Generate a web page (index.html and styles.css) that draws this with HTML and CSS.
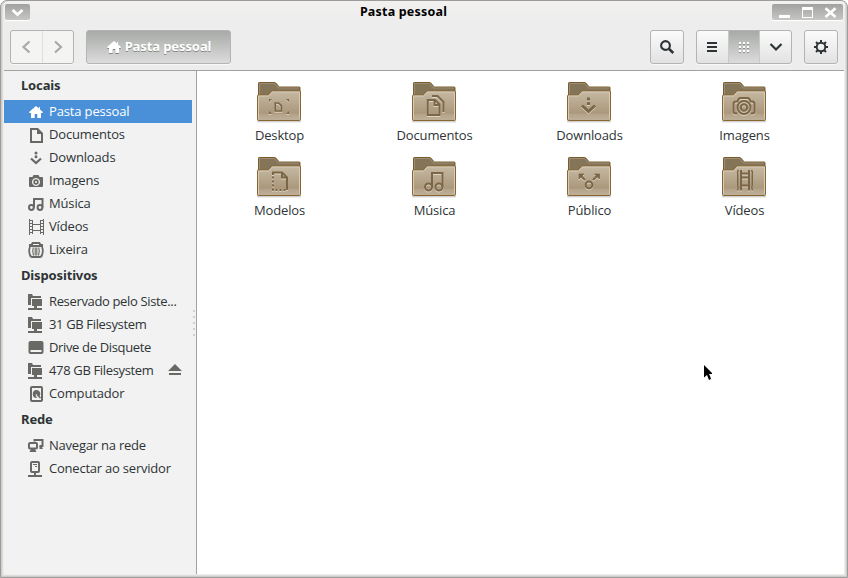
FILE: index.html
```html
<!DOCTYPE html>
<html lang="pt-BR">
<head>
    <meta charset="UTF-8">
    <meta name="viewport" content="width=device-width, initial-scale=1.0">
    <title>Pasta pessoal</title>
    <link rel="stylesheet" href="styles.css">
</head>
<body>

    <!-- shared symbols -->
    <svg class="defs" width="0" height="0">
        <defs>
            <linearGradient id="folder-front" x1="0" y1="0" x2="0" y2="1">
                <stop offset="0" stop-color="#c6b9a3"/>
                <stop offset="0.75" stop-color="#ab987c"/>
                <stop offset="0.8" stop-color="#b5a48b"/>
                <stop offset="1" stop-color="#bfb09a"/>
            </linearGradient>
            <linearGradient id="folder-shadow" x1="0" y1="0" x2="0" y2="1">
                <stop offset="0" stop-color="#000" stop-opacity="0.3"/>
                <stop offset="1" stop-color="#000" stop-opacity="0"/>
            </linearGradient>
        </defs>
        <symbol id="folder" viewBox="0 0 48 48">
            <rect x="2" y="41.5" width="44" height="2.6" rx="1" fill="url(#folder-shadow)"/>
            <path d="M3.5 20V4.2q0-.7.7-.7h15.6q.6 0 1 .5l3 3.500q.4.500 1 .500h19.500q.7 0 .7.700V20z" fill="#847458" stroke="#7a5c2c"/>
            <path d="M4.500 15V4.500h15l3.800 4.500h20.700" fill="none" stroke="#a2937b" stroke-width=".8"/>
            <path d="M2.500 40.300V17q0-1 1-1h9.200q.8 0 1.300-.6l2.200-2.700q.5-.7 1.300-.7H44.500q1 0 1 1V40.300q0 1.200-1 1.200H3.500q-1 0-1-1.200z" fill="url(#folder-front)" stroke="#89662f"/>
            <path d="M3.500 40V17h9.800q.6 0 1-.5l2.400-2.900q.4-.6 1.200-.6H44.500V40" fill="none" stroke="#d9cfbf" stroke-width=".9"/>
        </symbol>
        <symbol id="home" viewBox="0 0 16 16">
            <path d="M8 2 .8 8.300 2 9h1v5h3.700v-4h2.600v4H13V9h1l1.200-.7L12 5.500V3h-1v1.600z"/>
        </symbol>
        <symbol id="volume" viewBox="0 0 16 16">
            <path d="M0 0h4l1 2h8v2H3v7H0z"/>
            <path d="M4 5h10v7H9v2h5v2H0v-2h6v-2H4z"/>
        </symbol>
    </svg>

    <div class="window">
        <header class="titlebar">
            <button class="title-button" aria-label="Menu">
                <svg width="25" height="16"><path d="M7.500 6 12.500 10.500 17.500 6" fill="none" stroke="#fff" stroke-width="2.800"/></svg>
            </button>
            <h1 class="title">Pasta pessoal</h1>
            <div class="title-button controls">
                <svg width="71" height="16">
                    <path d="M7 11h11v3H7z" fill="#fff"/>
                    <path d="M30 3h11v11H30zM31 6v7h9V6z" fill="#fff" fill-rule="evenodd"/>
                    <path d="M53.500 4.200 63.500 13M63.500 4.200 53.500 13" stroke="#fff" stroke-width="2.600" fill="none"/>
                </svg>
            </div>
        </header>

        <nav class="toolbar">
            <div class="button-group nav-group">
                <button aria-label="Voltar"><svg width="16" height="16"><path d="M11.500 2.500 5.500 8l6 5.500" fill="none" stroke="#a7aba7" stroke-width="2.200"/></svg></button>
                <button aria-label="Avançar"><svg width="16" height="16"><path d="M5 2.500 11 8l-6 5.500" fill="none" stroke="#a7aba7" stroke-width="2.200"/></svg></button>
            </div>
            <button class="path-button">
                <svg width="16" height="16" fill="#fff"><use href="#home"/></svg>
                <span>Pasta pessoal</span>
            </button>
            <button class="tool-button search" aria-label="Pesquisar">
                <svg width="16" height="16" fill="none" stroke="#2e3436"><circle cx="6.500" cy="6.500" r="4.400" stroke-width="2.100"/><path d="M9.800 9.800 14.300 14" stroke-width="2.600"/></svg>
            </button>
            <div class="button-group view-group">
                <button aria-label="Lista"><svg width="16" height="16" fill="#2e3436"><path d="M3 3h10v2H3zM3 7h10v2H3zM3 11h10v2H3z"/></svg></button>
                <button class="active" aria-label="Ícones">
                    <svg width="16" height="16" fill="none" stroke-width="2" stroke-dasharray="2 2">
                        <path d="M3 5h10M3 9h10M3 13h10" stroke="#8f938f"/>
                        <path d="M3 4h10M3 8h10M3 12h10" stroke="#fff"/>
                    </svg>
                </button>
                <button aria-label="Opções"><svg width="16" height="16"><path d="M2.500 5 8 10.500 13.500 5" fill="none" stroke="#2e3436" stroke-width="2.200"/></svg></button>
            </div>
            <button class="tool-button gear" aria-label="Configurações">
                <svg width="16" height="16" fill="none" stroke="#2e3436">
                    <circle cx="8" cy="8" r="4.300" stroke-width="2"/>
                    <path d="M8 1v3M8 12v3M1 8h3M12 8h3M3 3l2 2M11 11l2 2M13 3l-2 2M5 11l-2 2" stroke-width="2"/>
                </svg>
            </button>
        </nav>

        <main class="content">
            <aside class="sidebar">
                <h2>Locais</h2>
                <ul>
                    <li class="selected"><svg class="icon"><use href="#home"/></svg><span>Pasta pessoal</span></li>
                    <li><svg class="icon"><path d="M2 1h8l5 5v10H2zM4 3v11h9V7H9V3z" fill-rule="evenodd"/></svg><span>Documentos</span></li>
                    <li><svg class="icon"><circle cx="8" cy="3" r="1.500"/><circle cx="8" cy="6.800" r="1.500"/><path d="M3 8.500 8 13l5-4.500" fill="none" stroke="#686964" stroke-width="2.200"/></svg><span>Downloads</span></li>
                    <li><svg class="icon"><path d="M1.800 4H4.500l1-2h5l1 2h2.700q.8 0 .8.800V13q0 1-1 1H2q-1 0-1-1V4.800q0-.8.800-.8zM8 5a4 4 0 1 0 .01 0z" fill-rule="evenodd"/><circle cx="8" cy="9" r="2.700"/><circle cx="8" cy="9" r="1.100" fill="#f2f2f2"/></svg><span>Imagens</span></li>
                    <li><svg class="icon"><g fill="none" stroke="#686964" stroke-width="2"><circle cx="3.400" cy="11.500" r="2.400"/><circle cx="12" cy="11.500" r="2.400"/><path d="M6 11.500V3h8.500v8.500"/></g></svg><span>Música</span></li>
                    <li><svg class="icon"><g fill="none" stroke="#686964"><path d="M1.500 0v16M4.500 1v14M12.500 1v14M15.500 0v16M4 5.500h9M4 11.500h9"/><path d="M3 1v15M14 1v15" stroke-width="2" stroke-dasharray="1 2"/></g></svg><span>Vídeos</span></li>
                    <li><svg class="icon"><path d="M4 0h8l1 2h2v3H1V2h2zM5 2v1h6V2z" fill-rule="evenodd"/><path d="M2 5q-1.500 3-.2 7.500.5 2.500 2.500 2.500h7.400q2 0 2.500-2.500 1.300-4.500-.2-7.500" fill="none" stroke="#686964" stroke-width="1.800"/><path d="M5.300 5.500q-1.300 3.500.2 8M7.200 5.500v8M8.800 5.500v8M10.700 5.500q1.300 3.500-.2 8" fill="none" stroke="#686964" stroke-width="1.100"/></svg><span>Lixeira</span></li>
                </ul>
                <h2>Dispositivos</h2>
                <ul class="devices">
                    <li><svg class="icon"><use href="#volume"/></svg><span>Reservado pelo Siste...</span></li>
                    <li><svg class="icon"><use href="#volume"/></svg><span>31 GB Filesystem</span></li>
                    <li><svg class="icon"><path d="M2.500 1h11q2 0 2 2v9q0 2-2 2h-11q-2 0-2-2V3q0-2 2-2zM2.500 10v2h11v-2z" fill-rule="evenodd"/></svg><span>Drive de Disquete</span></li>
                    <li><svg class="icon"><use href="#volume"/></svg><span>478 GB Filesystem</span>
                        <svg class="eject" width="14" height="12"><path d="M7 0 14 7H0zM1 9h12v2H1z"/></svg>
                    </li>
                    <li><svg class="icon"><rect x="3" y="1" width="11" height="14" rx="1" fill="none" stroke="#686964" stroke-width="2"/><path d="M8.500 4a4 4 0 1 0 .5 8L7.500 9l1-1 3 2.500A4 4 0 0 0 8.500 4z"/><path d="m9 8.500 3.500 3.500" stroke="#686964" stroke-width="1.500"/></svg><span class="wide">Computador</span></li>
                </ul>
                <h2>Rede</h2>
                <ul class="network">
                    <li><svg class="icon"><g fill="none" stroke="#686964" stroke-width="2"><rect x="1" y="5" width="8" height="5.500" rx="1"/><path d="M6.500 3.500V2h8v6h-3"/></g><path d="M3 11h4l1.500 3h-7zM11.500 8h2l1.500 3h-3.500z"/></svg><span>Navegar na rede</span></li>
                    <li><svg class="icon"><rect x="3" y="1" width="8" height="10" rx="1" fill="none" stroke="#686964" stroke-width="2"/><path d="M6 12h2v2h6v2H0v-2h6zM5 3h4v1H5zM7 5h2v1H7z"/></svg><span>Conectar ao servidor</span></li>
                </ul>
                <div class="grip"></div>
            </aside>

            <section class="files">
                <figure class="file">
                    <svg width="48" height="48"><use href="#folder"/><g class="emblem"><path d="M14 23v-3h3zM34 23v-3h-3zM14 32v3h3zM34 32v3h-3z" fill="#7b6747" stroke="none"/><path d="M20.200 24h3.500l2.800 2.800V32h-6.300z" stroke-width="1.700"/></g></svg>
                    <figcaption>Desktop</figcaption>
                </figure>
                <figure class="file">
                    <svg width="48" height="48"><use href="#folder"/><g class="emblem"><path d="M17.700 21h7.300l4.500 4.500V36H17.700zM24.500 21v5h5M22 17h5.500l6 6v10"/></g></svg>
                    <figcaption>Documentos</figcaption>
                </figure>
                <figure class="file">
                    <svg width="48" height="48"><use href="#folder"/><g class="emblem"><path d="M23.500 18.500v3M23.500 23v3" stroke-width="3"/><path d="M17 26.500 23.500 32.500 30 26.500" stroke-width="2.800"/></g></svg>
                    <figcaption>Downloads</figcaption>
                </figure>
                <figure class="file">
                    <svg width="48" height="48"><use href="#folder"/><g class="emblem" stroke-width="1.600"><path d="M17 34.500h-1q-2.500 0-2.500-2.500V25q0-2.500 2.500-2.500h1.500q1-3.500 3-3.500h7q2 0 3 3.500H32q2.500 0 2.500 2.500v7q0 2.500-2.500 2.500h-1"/><circle cx="24" cy="28.500" r="6.500"/><circle cx="24" cy="28.500" r="3.200"/></g></svg>
                    <figcaption>Imagens</figcaption>
                </figure>
                <figure class="file">
                    <svg width="48" height="48"><use href="#folder"/><g class="emblem"><path d="M18 21v-2.500h9l5 5V36M27 18.500V23.500H32"/><path d="M18 22.500V36h14" stroke-dasharray="2 2"/></g></svg>
                    <figcaption>Modelos</figcaption>
                </figure>
                <figure class="file">
                    <svg width="48" height="48"><use href="#folder"/><g class="emblem"><circle cx="18.500" cy="33" r="3.500"/><circle cx="29" cy="33" r="3.500"/><path d="M22 33V19h10.500v14"/></g></svg>
                    <figcaption>Música</figcaption>
                </figure>
                <figure class="file">
                    <svg width="48" height="48"><use href="#folder"/><g class="emblem"><circle cx="24" cy="31" r="3.400"/><path d="m15 21 5 5M33 21l-5 5"/><path d="M14 20h5l-5 5zM34.500 20h-5l5 5z" fill="#7b6747" stroke-width=".8"/></g></svg>
                    <figcaption>Público</figcaption>
                </figure>
                <figure class="file">
                    <svg width="48" height="48"><use href="#folder"/><g class="emblem"><path d="M18.500 16q-1.500 2-.7 5v10q.8 3-.3 5.500M31.500 16q1.500 2 .7 5v10q-.8 3 .3 5.500" stroke-width="1.600"/><path d="M21 16v20.500M29 16v20.500M21 19.500h8M21 23.500h8M21 31.500h8" /></g></svg>
                    <figcaption>Vídeos</figcaption>
                </figure>
            </section>
        </main>
    </div>

    <svg class="cursor" width="9" height="16"><path d="M0 0 8 8v1H5l1 2 1 3-2 1-2-5-3 2.500z"/></svg>

</body>
</html>
```

FILE: styles.css
```css
* {
    box-sizing: border-box;
}

body {
    margin: 0;
    background-color: #fff;
    font-family: "Open Sans", "Noto Sans", sans-serif;
    font-size: 13px;
    color: #2e3436;
    overflow: hidden;
}

button {
    margin: 0;
    padding: 0;
    font: inherit;
    border: none;
    background: none;
}

.defs {
    position: absolute;
}

.window {
    display: flex;
    flex-direction: column;
    width: 848px;
    height: 578px;
    padding: 0 3px 3px;
    border: 1px solid #9c9c9a;
    border-radius: 7px 7px 0 0;
    background: linear-gradient(#f2f1f0, #ededed 24px);
    box-shadow: inset 1px 0 #d0cecb, inset -1px -1px #d0cecb, inset 2px 0 #dfddda, inset -2px -2px #dfddda;
}

.titlebar {
    display: flex;
    justify-content: space-between;
    height: 24px;
    padding: 3px 1px 0;
}

.title-button {
    width: 25px;
    height: 16px;
    border-radius: 2px;
    background: linear-gradient(#a2a2a0, #c6c6c4);
    box-shadow: 0 1px #fff;
}

.title-button svg {
    display: block;
}

.controls {
    width: 71px;
}

.title {
    margin: 0 0 0 5px;
    font-family: "Noto Sans", sans-serif;
    font-size: 12.5px;
    font-weight: bold;
    line-height: 15px;
    letter-spacing: 0.2px;
    color: #000;
}

.toolbar {
    display: flex;
    align-items: flex-start;
    height: 46px;
    padding: 5px 6px 0;
    border-bottom: 1px solid #a1a3a1;
}

.button-group,
.tool-button,
.path-button {
    height: 34px;
    border: 1px solid #b2b5b2;
    border-radius: 3px;
    background: linear-gradient(#fbfbfb, #e2e2e2);
    box-shadow: 0 1px #f8f8f8;
}

.button-group {
    display: flex;
}

.button-group button,
.tool-button,
.path-button {
    display: flex;
    align-items: center;
    justify-content: center;
}

.button-group button {
    flex: 1;
}

.button-group button + button {
    border-left: 1px solid #c8cac8;
}

.nav-group {
    width: 64px;
    background: #f4f4f2;
}

.nav-group button + button {
    border-left-color: #dededc;
}

.path-button {
    gap: 3px;
    width: 145px;
    margin-left: 12px;
    color: #fff;
    font-family: "Noto Sans", sans-serif;
    font-weight: bold;
    background: linear-gradient(#a7aaa7, #dcdcdc);
    text-shadow: 0 1px #858985;
}

.path-button span {
    padding-bottom: 2px;
    letter-spacing: -0.1px;
}

.path-button svg {
    filter: drop-shadow(0 1px 0 #858985);
}

.search {
    margin-left: auto;
}

.tool-button {
    width: 34px;
}

.view-group {
    width: 96px;
    margin: 0 12px;
}

.view-group .active {
    background: linear-gradient(#a7aaa7, #dcdcdc);
}

.content {
    display: flex;
    flex: 1;
    min-height: 0;
}

.sidebar {
    position: relative;
    width: 193px;
    padding-right: 4px;
    border-right: 1px solid #a1a3a1;
    background: #f2f2f2;
}

.sidebar h2 {
    margin: 0;
    padding-left: 17px;
    font-family: "Noto Sans", sans-serif;
    font-size: 13px;
    line-height: 29px;
    letter-spacing: -0.15px;
}

.sidebar ul {
    margin: 0;
    padding: 0;
    list-style: none;
}

.sidebar li {
    display: flex;
    align-items: center;
    gap: 5px;
    height: 23px;
    padding-left: 24px;
    white-space: nowrap;
    fill: #686964;
}

.sidebar li span {
    padding-bottom: 2px;
    letter-spacing: -0.15px;
}

.sidebar .devices span {
    letter-spacing: -0.35px;
}

.sidebar .devices .wide {
    letter-spacing: -0.15px;
}

.sidebar .network span {
    letter-spacing: -0.22px;
}

.sidebar li.selected {
    background: #4a90d9;
    color: #fff;
    fill: #fff;
}

.icon {
    width: 16px;
    height: 16px;
    flex: none;
}

.devices .icon,
.network .icon {
    overflow: visible;
}

.eject {
    margin: 0 10px 2px auto;
}

/* pane resize handle */
.grip {
    position: absolute;
    right: 1px;
    top: 239px;
    width: 2px;
    height: 26px;
    background: repeating-linear-gradient(#cfcfcd 0 2px, transparent 2px 6px);
}

.files {
    display: grid;
    grid-template-columns: repeat(4, 155px);
    grid-auto-rows: 75px;
    flex: 1;
    align-content: start;
    padding: 8px 0 0 4.5px;
    background: #fff;
}

.file {
    margin: 0;
    text-align: center;
}

.file svg {
    display: block;
    margin: 0 auto;
}

.file figcaption {
    padding-left: 1px;
    line-height: 16px;
    letter-spacing: -0.15px;
}

.emblem {
    fill: none;
    stroke: #7b6747;
    stroke-width: 2;
    filter: drop-shadow(0 1px 0 rgba(230, 222, 208, 0.8));
}

.cursor {
    position: absolute;
    left: 704px;
    top: 365px;
}
```
